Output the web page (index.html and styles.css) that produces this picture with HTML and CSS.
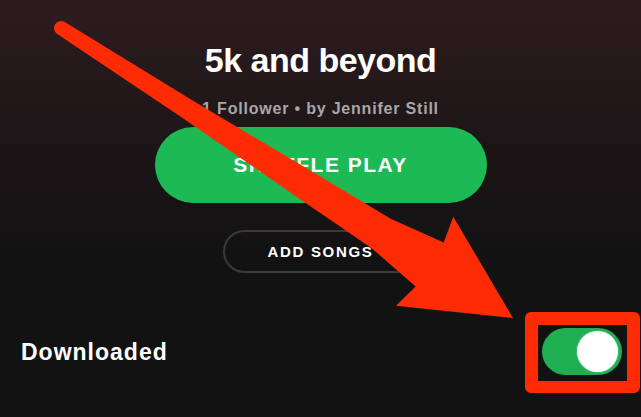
FILE: index.html
```html
<!DOCTYPE html>
<html lang="en">
<head>
  <meta charset="UTF-8">
  <title>5k and beyond</title>
  <link rel="stylesheet" href="styles.css">
</head>
<body>
  <div class="screen">
    <div class="playlist-header">
      <h1 class="title">5k and beyond</h1>
      <p class="meta">1 Follower • by Jennifer Still</p>
      <button class="shuffle-btn">SHUFFLE PLAY</button>
      <button class="add-btn">ADD SONGS</button>
    </div>

    <div class="download-row">
      <span class="download-label">Downloaded</span>
      <div class="highlight">
        <div class="toggle">
          <span class="knob"></span>
        </div>
      </div>
    </div>

    <!-- annotation arrow drawn over the screen -->
    <svg class="arrow" viewBox="0 0 641 417" width="641" height="417">
      <g transform="translate(61 28) rotate(32.68)">
        <path d="M0,-7 L150,-10 L280,-14.5 L380,-17.5 L438,-26 L432,-53 L537,0 L432,53 L438,26 L380,17.5 L280,14.5 L150,10 L0,7 A7,7 0 0 1 0,-7 Z" fill="#fe2b05"/>
      </g>
    </svg>
  </div>
</body>
</html>
```

FILE: styles.css
```css
body {
  margin: 0;
  background: #121212;
  font-family: 'Liberation Sans', Arial, sans-serif;
}

.screen {
  position: relative;
  width: 641px;
  height: 417px;
  overflow: hidden;
  background: linear-gradient(#2d1c1f 0, #1e1618 130px, #131213 250px, #121212 100%);
  color: #fff;
}

.playlist-header {
  display: flex;
  flex-direction: column;
  align-items: center;
  padding-top: 40px;
}

.title {
  margin: 0;
  font-size: 34px;
  line-height: 40px;
  font-weight: bold;
  letter-spacing: -0.5px;
}

.meta {
  margin: 19px 0 0;
  font-size: 16px;
  line-height: 20px;
  font-weight: bold;
  letter-spacing: 0.8px;
  color: #a9a7a8;
}

button {
  font-family: inherit;
  font-weight: bold;
  color: #fff;
  cursor: pointer;
}

.shuffle-btn {
  margin-top: 8px;
  width: 332px;
  height: 76px;
  border: none;
  border-radius: 38px;
  background: #1db954;
  font-size: 21px;
  letter-spacing: 1.5px;
}

.add-btn {
  margin-top: 27px;
  width: 196px;
  height: 43px;
  border: 2px solid #3a3a3a;
  border-radius: 22px;
  background: transparent;
  font-size: 15px;
  letter-spacing: 1.7px;
}

.download-row {
  display: flex;
  justify-content: space-between;
  align-items: center;
  margin-top: 39px;
  padding: 0 1px 0 21px;
}

.download-label {
  font-size: 23px;
  font-weight: bold;
  letter-spacing: 1px;
}

.highlight {
  border: 13px solid #fe2b05;
  border-bottom-width: 12px;
  border-radius: 6px;
  padding: 3px 5px 6px 4px;
  background: #121212;
}

.toggle {
  display: flex;
  justify-content: flex-end;
  align-items: center;
  width: 80px;
  height: 47px;
  padding: 0 4px;
  box-sizing: border-box;
  border-radius: 24px;
  background: #1fae52;
}

.knob {
  width: 41px;
  height: 41px;
  border-radius: 50%;
  background: #fff;
  box-shadow: 0 0 2px #9fe0b5;
}

.arrow {
  position: absolute;
  top: 0;
  left: 0;
  pointer-events: none;
}
```
